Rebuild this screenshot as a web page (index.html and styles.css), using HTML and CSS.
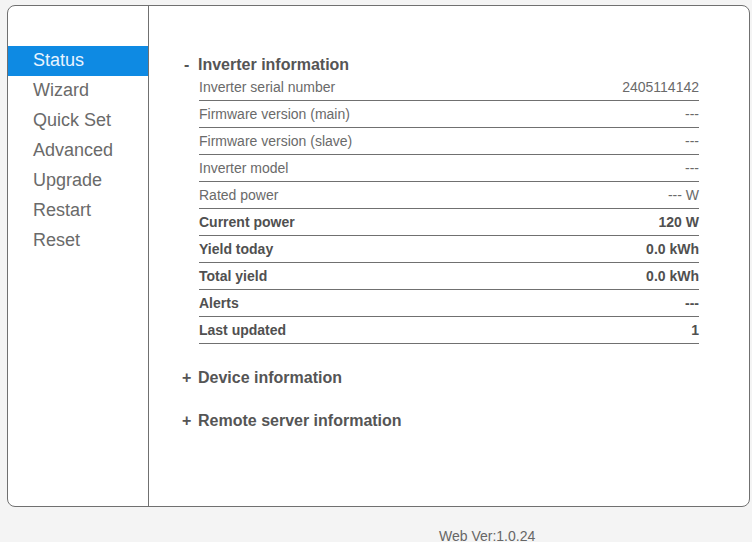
FILE: index.html
```html
<!DOCTYPE html>
<html>
<head>
<meta charset="utf-8">
<link rel="stylesheet" href="styles.css">
</head>
<body>
<div class="card">
  <nav class="sidebar">
    <div class="nav-item active">Status</div>
    <div class="nav-item">Wizard</div>
    <div class="nav-item">Quick Set</div>
    <div class="nav-item">Advanced</div>
    <div class="nav-item">Upgrade</div>
    <div class="nav-item">Restart</div>
    <div class="nav-item">Reset</div>
  </nav>
  <main class="content">
    <div class="section-head open"><span class="sign minus">-</span>Inverter information</div>
    <div class="table">
      <div class="row"><span>Inverter serial number</span><span>2405114142</span></div>
      <div class="row"><span>Firmware version (main)</span><span>---</span></div>
      <div class="row"><span>Firmware version (slave)</span><span>---</span></div>
      <div class="row"><span>Inverter model</span><span>---</span></div>
      <div class="row"><span>Rated power</span><span>--- W</span></div>
      <div class="row bold"><span>Current power</span><span>120 W</span></div>
      <div class="row bold"><span>Yield today</span><span>0.0 kWh</span></div>
      <div class="row bold"><span>Total yield</span><span>0.0 kWh</span></div>
      <div class="row bold"><span>Alerts</span><span>---</span></div>
      <div class="row bold"><span>Last updated</span><span>1</span></div>
    </div>
    <div class="section-head collapsed first"><span class="sign plus">+</span>Device information</div>
    <div class="section-head collapsed"><span class="sign plus">+</span>Remote server information</div>
  </main>
</div>
<footer class="footer">Web Ver:1.0.24</footer>
</body>
</html>
```
FILE: styles.css
```css
html, body {
  margin: 0;
  padding: 0;
  background: #f4f4f4;
  font-family: "Liberation Sans", Arial, sans-serif;
  color: #666;
}
.card {
  margin: 5px 0 0 7px;
  width: 741px;
  height: 500px;
  border: 1px solid #707070;
  border-radius: 8px;
  background: #fff;
  display: flex;
  overflow: hidden;
}
.sidebar {
  width: 140px;
  border-right: 1px solid #707070;
  padding-top: 40px;
  flex-shrink: 0;
}
.nav-item {
  height: 30px;
  line-height: 28px;
  padding-left: 25px;
  font-size: 18px;
  color: #6a6a6a;
}
.nav-item.active {
  background: #0e8ae3;
  color: #e8f4ff;
}
.content {
  flex: 1;
  padding-top: 49px;
}
.section-head {
  height: 20px;
  line-height: 20px;
  font-size: 16px;
  font-weight: bold;
  color: #555;
  padding-left: 32px;
}
.section-head.open {
  height: 19px;
}
.sign {
  display: inline-block;
  text-align: left;
}
.sign.minus {
  width: 14px;
  padding-left: 3px;
}
.sign.plus {
  width: 16px;
  padding-left: 1px;
}
.collapsed.first {
  margin-top: 24px;
}
.collapsed + .collapsed {
  margin-top: 23px;
}
.table {
  margin-left: 50px;
  width: 500px;
}
.row {
  display: flex;
  justify-content: space-between;
  height: 26px;
  line-height: 26px;
  border-bottom: 1px solid #707070;
  font-size: 14px;
  color: #6a6a6a;
}
.row.bold {
  font-weight: bold;
  color: #505050;
}
.footer {
  margin-top: 19px;
  padding-left: 439px;
  font-size: 14px;
  line-height: 20px;
  color: #666;
}
```
